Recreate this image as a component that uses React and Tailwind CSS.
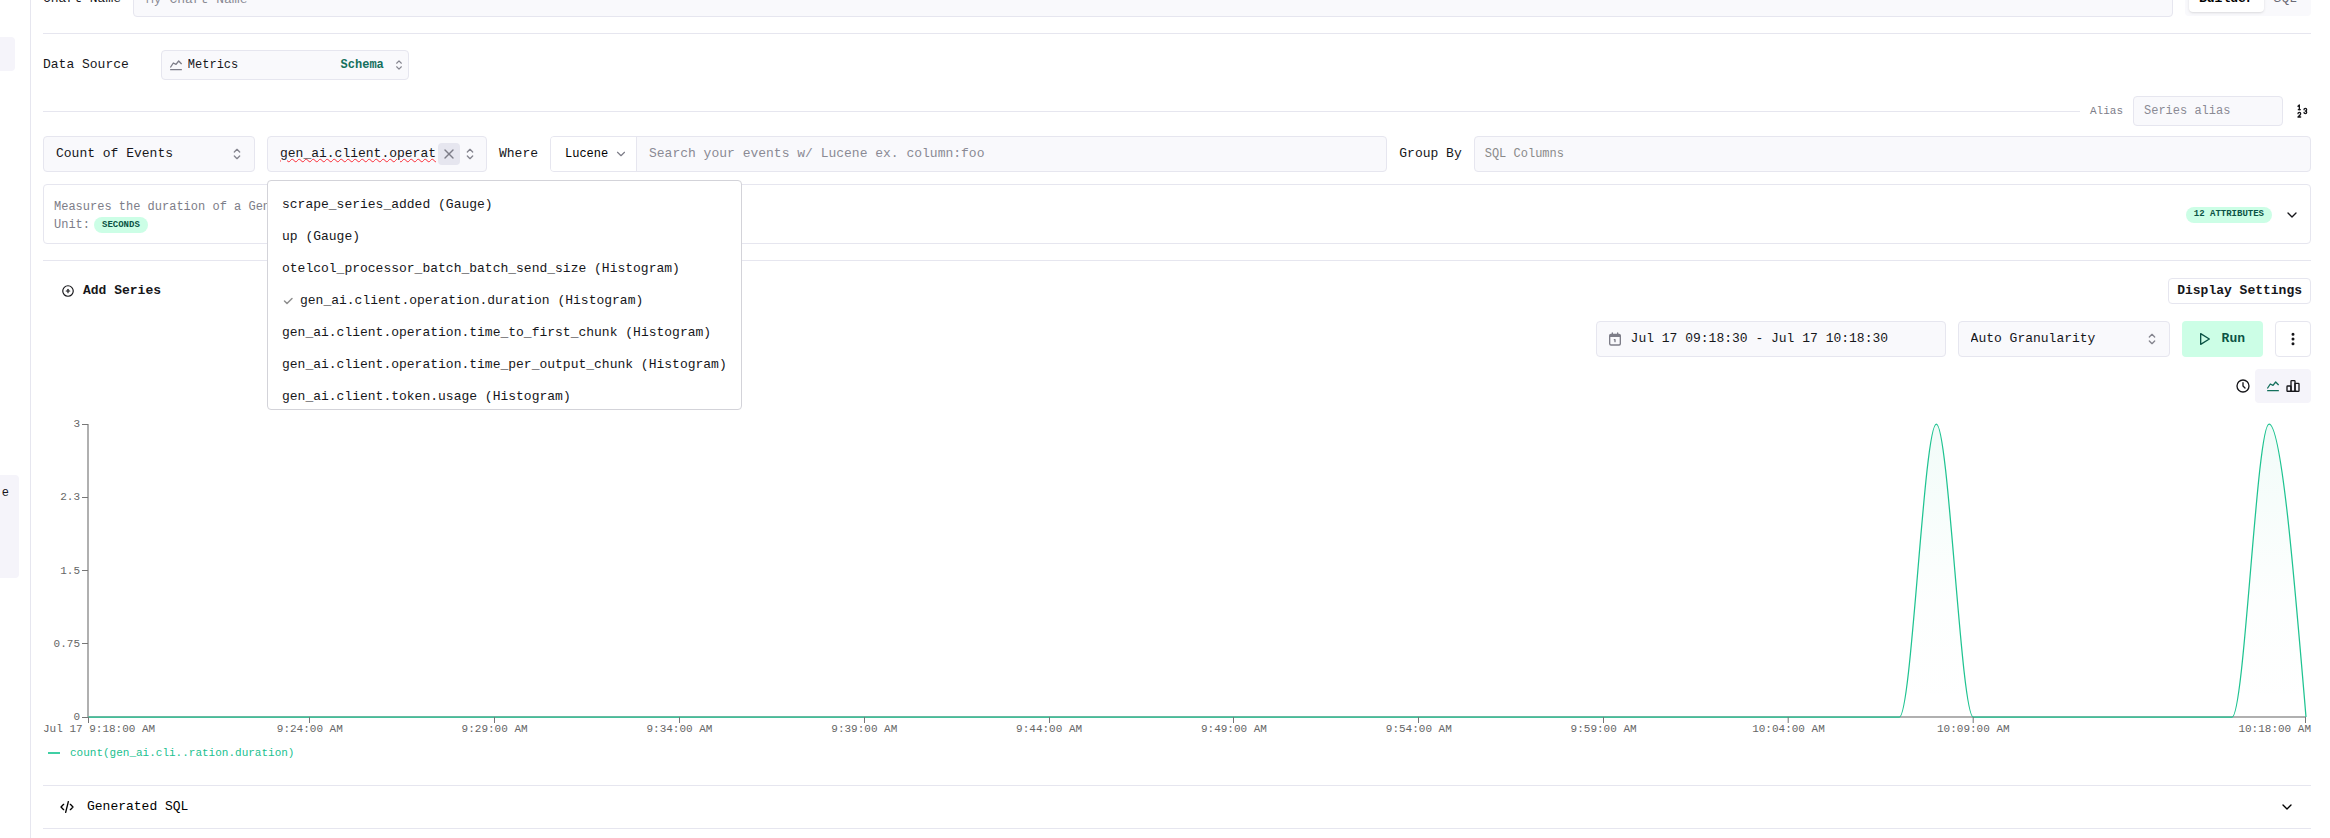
import React from 'react'
import clsx from 'clsx'
import {
  TbCalendarFilled,
  TbChartBar,
  TbChartLine,
  TbCheck,
  TbChevronDown,
  TbCirclePlus,
  TbClock,
  TbCode,
  TbDotsVertical,
  TbNumbers,
  TbPlayerPlay,
  TbSelector,
  TbX,
} from 'react-icons/tb'

const METRICS = [
  { name: 'scrape_series_added', kind: 'Gauge' },
  { name: 'up', kind: 'Gauge' },
  { name: 'otelcol_processor_batch_batch_send_size', kind: 'Histogram' },
  { name: 'gen_ai.client.operation.duration', kind: 'Histogram', selected: true },
  { name: 'gen_ai.client.operation.time_to_first_chunk', kind: 'Histogram' },
  { name: 'gen_ai.client.operation.time_per_output_chunk', kind: 'Histogram' },
  { name: 'gen_ai.client.token.usage', kind: 'Histogram' },
]

// minutes since 9:18
const RANGE = 60
const X_TICKS = [
  { at: 6, label: '9:24:00 AM' },
  { at: 11, label: '9:29:00 AM' },
  { at: 16, label: '9:34:00 AM' },
  { at: 21, label: '9:39:00 AM' },
  { at: 26, label: '9:44:00 AM' },
  { at: 31, label: '9:49:00 AM' },
  { at: 36, label: '9:54:00 AM' },
  { at: 41, label: '9:59:00 AM' },
  { at: 46, label: '10:04:00 AM' },
  { at: 51, label: '10:09:00 AM' },
]

const Y_TICKS = ['3', '2.3', '1.5', '0.75', '0']

const SERIES_PATH =
  'M0 293H49C49.333 293 49.667 0 50 0S50.667 293 51 293H58C58.333 293 58.667 0 59 0S59.667 146 60 293'

const FIELD = 'rounded border border-[#e6e6ef] bg-[#f9f9fc]'

function Divider() {
  return <hr className="border-t border-[#e6e6ef]" />
}

function Badge({ children }) {
  return (
    <span className="inline-flex h-4 items-center rounded-full bg-[#ccfee6] px-2 text-[9px] font-bold text-[#0b5345] uppercase">
      {children}
    </span>
  )
}

function SelectField({ label, value, className }) {
  return (
    <div className={clsx('relative', className)}>
      <select
        aria-label={label}
        defaultValue={value}
        className={clsx(FIELD, 'h-9 w-full appearance-none px-3 text-[13px] text-[#16161a] outline-none')}
      >
        <option>{value}</option>
      </select>
      <TbSelector className="pointer-events-none absolute top-2.5 right-2.5 size-4 text-[#85858f]" />
    </div>
  )
}

function Sidebar() {
  return (
    <aside className="flex w-[31px] shrink-0 flex-col border-r border-[#e6e6ef]">
      <div className="mt-[37px] mr-[15px] h-[34px] rounded-r bg-[#f5f4fa]" />
      <div className="mt-[404px] mr-[11px] flex h-[103px] justify-end overflow-hidden rounded-r bg-[#f5f4fa] pt-2.5 pr-2.5 text-xs">
        e
      </div>
    </aside>
  )
}

function ChartNameRow() {
  return (
    <div className="-mt-[19px] flex items-center gap-3">
      <label htmlFor="chart-name" className="text-[13px]">Chart Name</label>
      <input
        id="chart-name"
        placeholder="My Chart Name"
        className={clsx(FIELD, 'h-9 min-w-0 flex-1 px-3 text-[13px] outline-none placeholder:text-[#8a8a94]')}
      />
      <div className="flex h-[34px] items-center rounded bg-[#f9f9fc] px-1 text-[13px]">
        <button className="h-[26px] rounded bg-white px-2.5 font-bold text-black shadow">Builder</button>
        <button className="h-[26px] px-2.5 text-[#6b6b76]">SQL</button>
      </div>
    </div>
  )
}

function DataSourceRow() {
  return (
    <div className="flex items-center gap-8">
      <label htmlFor="data-source" className="text-[13px]">Data Source</label>
      <div className={clsx(FIELD, 'flex h-[30px] w-[248px] items-center gap-1 pr-0.5 pl-1.5 text-xs')}>
        <TbChartLine className="size-4 shrink-0 text-[#7d7d88]" />
        <select id="data-source" className="min-w-0 flex-1 appearance-none outline-none">
          <option>Metrics</option>
        </select>
        <a href="#schema" className="pr-1 font-bold text-[#14705d]">Schema</a>
        <TbSelector className="size-3.5 shrink-0 text-[#85858f]" />
      </div>
    </div>
  )
}

function AliasRow() {
  return (
    <div className="flex items-center gap-2.5">
      <hr className="flex-1 border-t border-[#e6e6ef]" />
      <label htmlFor="alias" className="text-[11px] text-[#7d7d88]">Alias</label>
      <input
        id="alias"
        placeholder="Series alias"
        className={clsx(FIELD, 'h-[30px] w-[150px] px-2.5 text-xs outline-none placeholder:text-[#8a8a94]')}
      />
      <button aria-label="Number format" className="flex w-[18px] justify-center">
        <TbNumbers className="size-4" />
      </button>
    </div>
  )
}

function MetricMenu() {
  return (
    <ul
      role="listbox"
      className="absolute top-11 left-0 z-10 max-h-[230px] w-max overflow-hidden rounded border border-[#d3d3d9] bg-white pt-2 text-[13px]"
    >
      {METRICS.map((m) => (
        <li
          key={m.name}
          role="option"
          aria-selected={!!m.selected}
          className="flex h-8 items-center gap-1.5 px-3.5 whitespace-nowrap"
        >
          {m.selected && <TbCheck className="size-3 text-[#8f8f8f]" strokeWidth={3} />}
          {m.name} ({m.kind})
        </li>
      ))}
    </ul>
  )
}

function SeriesRow() {
  return (
    <div className="flex items-center gap-3">
      <SelectField label="Aggregation" value="Count of Events" className="w-[212px]" />
      <div className="relative">
        <div className={clsx(FIELD, 'flex h-9 w-[220px] items-center gap-0.5 pr-2 pl-3')}>
          <input
            aria-label="Metric"
            defaultValue="gen_ai.client.operation.duration (Histogram)"
            className="min-w-0 flex-1 text-[13px] underline decoration-red-500 decoration-wavy decoration-1 outline-none"
          />
          <button aria-label="Clear metric" className="flex size-[22px] items-center justify-center rounded bg-[#e6e6ef]">
            <TbX className="size-4 text-[#7d7d88]" />
          </button>
          <TbSelector className="size-4 text-[#85858f]" />
        </div>
        <MetricMenu />
      </div>
      <label htmlFor="where" className="text-[13px]">Where</label>
      <div className={clsx(FIELD, 'flex h-9 min-w-0 flex-1 overflow-hidden')}>
        <div className="relative w-[86px] shrink-0 border-r border-[#e6e6ef] bg-white">
          <select aria-label="Query language" className="size-full appearance-none pl-3.5 text-xs font-medium text-black outline-none">
            <option>Lucene</option>
          </select>
          <TbChevronDown className="pointer-events-none absolute top-2.5 right-2 size-3.5 text-[#7d7d88]" />
        </div>
        <input
          id="where"
          placeholder="Search your events w/ Lucene ex. column:foo"
          className="min-w-0 flex-1 px-3 text-[13px] outline-none placeholder:text-[#8a8a94]"
        />
      </div>
      <label htmlFor="group-by" className="text-[13px]">Group By</label>
      <div className={clsx(FIELD, 'flex h-9 min-w-0 flex-1')}>
        <input
          id="group-by"
          placeholder="SQL Columns"
          className="min-w-0 flex-1 px-2.5 text-xs outline-none placeholder:text-[#8a8a8a]"
        />
      </div>
    </div>
  )
}

function MetricInfo() {
  return (
    <div className="flex h-[60px] items-center justify-between rounded border border-[#e6e6ef] px-2.5 pt-0.5">
      <div className="text-xs text-[#7d7d88]">
        <p className="leading-5">Measures the duration of a Gen</p>
        <p className="flex items-center gap-1">
          Unit: <Badge>Seconds</Badge>
        </p>
      </div>
      <div className="flex items-center gap-3">
        <Badge>12 Attributes</Badge>
        <button aria-label="Show attributes">
          <TbChevronDown className="size-4" />
        </button>
      </div>
    </div>
  )
}

function Toolbar() {
  return (
    <div className="flex justify-end gap-3 text-[13px]">
      <div className={clsx(FIELD, 'flex h-9 w-[350px] items-center gap-2 px-2.5')}>
        <TbCalendarFilled className="size-4 text-[#7d7d88]" />
        <input
          aria-label="Time range"
          defaultValue="Jul 17 09:18:30 - Jul 17 10:18:30"
          className="min-w-0 flex-1 outline-none"
        />
      </div>
      <SelectField label="Granularity" value="Auto Granularity" className="w-[212px]" />
      <button className="flex h-9 items-center gap-2.5 rounded bg-[#ccfee6] pr-[18px] pl-3.5 font-bold text-[#0b5345]">
        <TbPlayerPlay className="size-4" />
        Run
      </button>
      <button aria-label="More" className="flex size-9 items-center justify-center rounded border border-[#e6e6ef]">
        <TbDotsVertical className="size-4" strokeWidth={2.5} />
      </button>
    </div>
  )
}

function Chart() {
  return (
    <div className="pt-[21px] text-[11px] leading-4 text-[#666]">
      <div className="flex h-[293px]">
        {/* Y axis */}
        <div className="relative w-[45px] shrink-0">
          {Y_TICKS.map((label, i) => (
            <div
              key={label}
              className="absolute right-0 flex -translate-y-1/2 items-center gap-0.5"
              style={{ top: `${i * 25}%` }}
            >
              {label}
              <span className="h-px w-1.5 bg-[#777]" />
            </div>
          ))}
        </div>
        <svg className="mr-[5px] h-full min-w-0 flex-1 overflow-visible" viewBox="0 0 60 293" preserveAspectRatio="none">
          <defs>
            <linearGradient id="area" x1="0" y1="0" x2="0" y2="1">
              <stop offset="0" stopColor="#20c997" stopOpacity="0.06" />
              <stop offset="0.6" stopColor="#20c997" stopOpacity="0.01" />
              <stop offset="1" stopColor="#20c997" stopOpacity="0" />
            </linearGradient>
          </defs>
          <path d="M0 0V293H60" fill="none" stroke="#b0b0b0" strokeWidth="2" vectorEffect="non-scaling-stroke" />
          <path d={SERIES_PATH} fill="url(#area)" />
          <path d={SERIES_PATH} fill="none" stroke="#1fc391" strokeWidth="1.25" vectorEffect="non-scaling-stroke" />
        </svg>
      </div>
      {/* X axis */}
      <div className="relative mr-[5px] ml-[45px] h-7 whitespace-nowrap">
        <span className="absolute left-0 h-1.5 w-px bg-[#777]" />
        <span className="absolute top-1 -left-[45px]">Jul 17 9:18:00 AM</span>
        {X_TICKS.map((tick) => (
          <div
            key={tick.label}
            className="absolute flex -translate-x-1/2 flex-col items-center"
            style={{ left: `${(tick.at / RANGE) * 100}%` }}
          >
            <span className="-mb-0.5 h-1.5 w-px bg-[#777]" />
            {tick.label}
          </div>
        ))}
        <span className="absolute right-0 h-1.5 w-px bg-[#777]" />
        <span className="absolute top-1 -right-[5px]">10:18:00 AM</span>
      </div>
      <div className="flex items-center gap-2.5 pl-[5px] text-[#20bf8f]">
        <span className="h-0.5 w-3 bg-[#3fcfa4]" />
        count(gen_ai.cli..ration.duration)
      </div>
    </div>
  )
}

export default function App() {
  return (
    <div className="flex min-h-screen overflow-hidden bg-white font-['Liberation_Mono','DejaVu_Sans_Mono',monospace] text-[#16161a]">
      <Sidebar />
      <main className="flex min-w-0 flex-1 flex-col pr-[19px] pl-3">
        <div className="flex flex-col gap-4">
          <ChartNameRow />
          <Divider />
          <DataSourceRow />
          <AliasRow />
        </div>
        <div className="flex flex-col gap-3 pt-2.5 pb-4">
          <SeriesRow />
          <MetricInfo />
        </div>
        <Divider />
        <div className="flex h-[60px] items-center justify-between text-[13px] font-bold">
          <button className="flex items-center gap-2 pl-[18px]">
            <TbCirclePlus className="size-3.5" />
            Add Series
          </button>
          <button className="h-[26px] rounded border border-[#e6e6ef] px-2">Display Settings</button>
        </div>
        <Toolbar />
        <div className="flex items-center justify-end gap-1 pt-3">
          <button aria-label="Relative time">
            <TbClock className="size-4" />
          </button>
          <div className="flex h-[34px] items-center gap-1 rounded bg-[#f5f4fa] px-2.5">
            <button aria-label="Line chart">
              <TbChartLine className="size-4 text-[#14705d]" />
            </button>
            <button aria-label="Bar chart">
              <TbChartBar className="size-4" />
            </button>
          </div>
        </div>
        <Chart />
        <div className="pt-6">
          <Divider />
          <button className="flex h-[42px] w-full items-center pr-4 pl-4 text-[13px] text-black">
            <TbCode className="size-4" />
            <span className="flex-1 pl-3 text-left">Generated SQL</span>
            <TbChevronDown className="size-4" />
          </button>
          <Divider />
        </div>
      </main>
    </div>
  )
}
